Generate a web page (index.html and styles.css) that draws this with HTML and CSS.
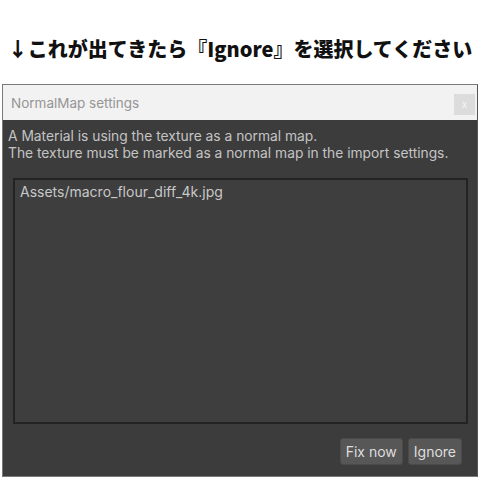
FILE: index.html
```html
<!DOCTYPE html>
<html lang="ja">
<head>
    <meta charset="UTF-8">
    <meta name="viewport" content="width=device-width, initial-scale=1.0">
    <title>NormalMap settings</title>
    <link rel="stylesheet" href="styles.css">
</head>
<body>

    <h1 class="caption">↓これが出てきたら『Ignore』を選択してください</h1>

    <!-- Dialog -->
    <div class="window">
        <div class="titlebar">
            <span class="title">NormalMap settings</span>
            <span class="close">x</span>
        </div>
        <div class="content">
            <p class="message">A Material is using the texture as a normal map.<br>The texture must be marked as a normal map in the import settings.</p>
            <div class="list">
                <div class="item">Assets/macro_flour_diff_4k.jpg</div>
            </div>
            <div class="actions">
                <button class="btn">Fix now</button>
                <button class="btn">Ignore</button>
            </div>
        </div>
    </div>

</body>
</html>
```

FILE: styles.css
```css
* { margin: 0; padding: 0; box-sizing: border-box; }
body { width: 480px; height: 480px; background: #fff; overflow: hidden; display: flex; flex-direction: column; }

/* Caption above the dialog */
.caption {
    height: 84px;
    display: flex;
    align-items: center;
    justify-content: center;
    padding-top: 12px;
    font-family: "Noto Sans CJK JP", sans-serif;
    font-weight: 900;
    font-size: 20px;
    color: #111;
}

/* Dialog window */
.window {
    margin: 0 2px 0 2px;
    height: 393px;
    border: 1px solid #7a7a7a;
    border-right-color: #555;
    display: flex;
    flex-direction: column;
    font-family: Inter, "Noto Sans", sans-serif;
}

.titlebar {
    height: 35px;
    background: #f2f2f2;
    display: flex;
    align-items: center;
    justify-content: space-between;
    padding: 0 2px 0 8px;
}

.title {
    font-size: 13.5px;
    color: #959595;
}

.close {
    width: 21px;
    height: 21px;
    background: #dcdcdc;
    color: #f4f4f4;
    font-size: 10px;
    display: flex;
    align-items: center;
    justify-content: center;
    margin-top: 3px;
}

.content {
    flex: 1;
    background: #3c3c3c;
    display: flex;
    flex-direction: column;
    padding: 8px 9px 10px 5px;
}

.message {
    font-size: 13.8px;
    line-height: 17px;
    color: #c4c4c4;
}

.list {
    margin: 16px 0 0 5px;
    height: 246px;
    background: #3e3e3e;
    border: 2px solid #232323;
    padding: 3px 5px;
}

.item {
    font-size: 14px;
    color: #c8c8c8;
}

.actions {
    display: flex;
    justify-content: flex-end;
    gap: 5px;
    margin-top: 14px;
    padding-right: 6px;
}

.btn {
    height: 27px;
    padding: 0 5px;
    background: #575757;
    border: 1px solid #4a4a4a;
    border-radius: 3px;
    color: #dedede;
    font-family: Inter, "Noto Sans", sans-serif;
    font-size: 14px;
}
```
